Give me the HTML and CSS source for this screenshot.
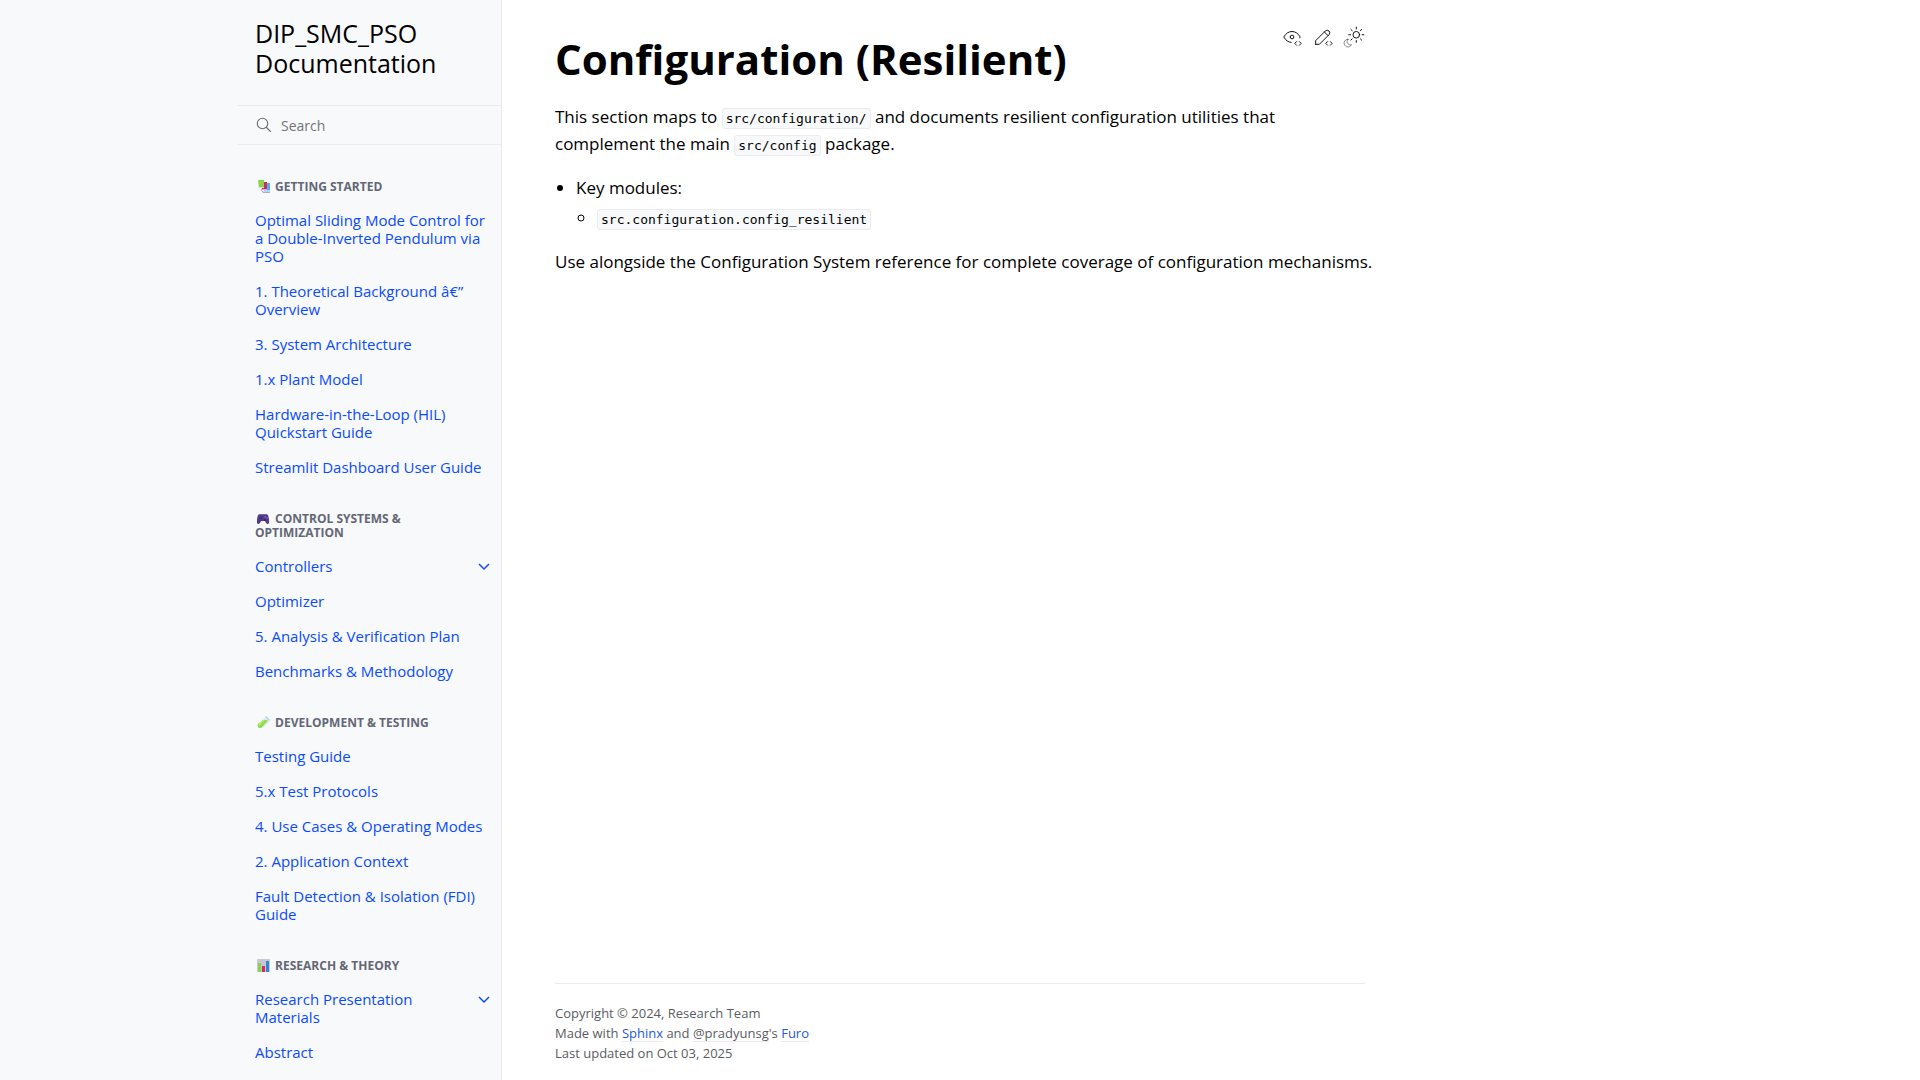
FILE: index.html
```html
<!DOCTYPE html>
<html lang="en">
<head>
<meta charset="utf-8">
<meta name="viewport" content="width=device-width, initial-scale=1">
<title>Configuration (Resilient) - DIP_SMC_PSO Documentation</title>
<link rel="stylesheet" href="styles.css">
</head>
<body>
<div class="page">
  <aside class="sidebar">
    <div class="sidebar-container">
      <a class="brand" href="#">DIP_SMC_PSO Documentation</a>
      <form class="search" role="search">
        <svg class="search-icon" viewBox="0 0 24 24" aria-hidden="true"><circle cx="10" cy="10" r="7"/><path d="M21 21l-6-6"/></svg>
        <input class="search-input" type="search" placeholder="Search" aria-label="Search">
      </form>
      <nav class="tree" aria-label="Documentation">
        <h2 class="caption"><svg class="emoji" viewBox="0 0 16 16" aria-hidden="true"><path fill="#b9a3c9" d="M5 11l4 3h6v1H8z"/><path fill="#4db2f2" d="M9 5h6v9H9z"/><path fill="#a9d8fb" d="M9 12h6v2H9z"/><path fill="#cf2960" d="M6 4h6v8H7z"/><path fill="#e8a2bf" d="M6 11h6v1H6z"/><path fill="#8bd34c" d="M3 2h6v8H4z"/><path fill="#d9dce4" d="M3 9h6v1H3z"/></svg> Getting Started</h2>
        <ul class="links">
          <li class="item"><a class="link" href="#">Optimal Sliding Mode Control for a Double-Inverted Pendulum via PSO</a></li>
          <li class="item"><a class="link" href="#">1. Theoretical Background â€” Overview</a></li>
          <li class="item"><a class="link" href="#">3. System Architecture</a></li>
          <li class="item"><a class="link" href="#">1.x Plant Model</a></li>
          <li class="item"><a class="link" href="#">Hardware-in-the-Loop (HIL) Quickstart Guide</a></li>
          <li class="item"><a class="link" href="#">Streamlit Dashboard User Guide</a></li>
        </ul>
        <h2 class="caption"><svg class="emoji" viewBox="0 0 16 16" aria-hidden="true"><path fill="#533a8c" d="M5 4h6l2 1 1 4v4q-1 2-3 0l-1-2H6l-1 2q-2 2-3 0V9l1-4z"/><path fill="#7a5fc0" d="M5 4h6v1H5z"/><circle fill="#2f2060" cx="6" cy="8" r="1"/><circle fill="#2f2060" cx="10" cy="10" r="1"/><circle fill="#3fa7e8" cx="10" cy="7" r=".7"/><circle fill="#ef5b5b" cx="12" cy="8" r=".7"/></svg> Control Systems &amp; Optimization</h2>
        <ul class="links">
          <li class="item"><a class="link" href="#">Controllers</a><button class="toggle" type="button" aria-label="Expand Controllers"><svg class="chevron" viewBox="0 0 12 12" aria-hidden="true"><path d="M1 3l5 5 5-5"/></svg></button></li>
          <li class="item"><a class="link" href="#">Optimizer</a></li>
          <li class="item"><a class="link" href="#">5. Analysis &amp; Verification Plan</a></li>
          <li class="item"><a class="link" href="#">Benchmarks &amp; Methodology</a></li>
        </ul>
        <h2 class="caption"><svg class="emoji" viewBox="0 0 16 16" aria-hidden="true"><path fill="#cfe3f5" d="M10 4l4 4-7 6q-2 1-4-1-1-2 1-3z"/><path fill="#8fdb3c" d="M8 6h5l-6 7q-2 2-4 0-1-2 0-3z"/><path fill="#b9ee7c" d="M8 6h2l-6 6q-1-1 0-2z"/><path fill="#a9cdee" d="M10 3l1-1 4 4-1 1z"/></svg> Development &amp; Testing</h2>
        <ul class="links">
          <li class="item"><a class="link" href="#">Testing Guide</a></li>
          <li class="item"><a class="link" href="#">5.x Test Protocols</a></li>
          <li class="item"><a class="link" href="#">4. Use Cases &amp; Operating Modes</a></li>
          <li class="item"><a class="link" href="#">2. Application Context</a></li>
          <li class="item"><a class="link" href="#">Fault Detection &amp; Isolation (FDI) Guide</a></li>
        </ul>
        <h2 class="caption"><svg class="emoji" viewBox="0 0 16 16" aria-hidden="true"><rect fill="#c9c6d3" x="2" y="2" width="13" height="13" rx="1"/><path fill="#8bd34c" d="M3 6h3v9H3z"/><path fill="#d52d62" d="M7 9h3v6H7z"/><path fill="#2f86dc" d="M11 4h3v11h-3z"/></svg> Research &amp; Theory</h2>
        <ul class="links">
          <li class="item"><a class="link" href="#">Research Presentation Materials</a><button class="toggle" type="button" aria-label="Expand Research Presentation Materials"><svg class="chevron" viewBox="0 0 12 12" aria-hidden="true"><path d="M1 3l5 5 5-5"/></svg></button></li>
          <li class="item"><a class="link" href="#">Abstract</a></li>
        </ul>
      </nav>
    </div>
  </aside>
  <div class="main">
    <main class="content">
      <header class="content-head">
        <h1 class="title">Configuration (Resilient)</h1>
        <div class="actions">
          <a class="action" href="#" aria-label="View this page"><svg class="icon" viewBox="0 0 24 24" aria-hidden="true"><path d="M10 12a2 2 0 1 0 4 0a2 2 0 0 0-4 0"/><path d="M11.11 17.958c-3.209-.307-5.91-2.293-8.11-5.958c2.4-4 5.4-6 9-6c3.6 0 6.6 2 9 6c-.21.352-.427.688-.647 1.008"/><path d="M20 21l2-2l-2-2"/><path d="M17 17l-2 2l2 2"/></svg></a>
          <a class="action" href="#" aria-label="Edit this page"><svg class="icon" viewBox="0 0 24 24" aria-hidden="true"><path d="M4 20h4l10.5-10.5a2.828 2.828 0 1 0-4-4l-10.5 10.5v4"/><path d="M13.5 6.5l4 4"/><path d="M20 21l2-2l-2-2"/><path d="M17 17l-2 2l2 2"/></svg></a>
          <button class="action" type="button" aria-label="Toggle Light / Dark / Auto color theme"><svg class="icon" viewBox="0 0 24 24" aria-hidden="true"><path opacity=".5" d="M5.411 14.504C5.471 14.504 5.532 14.504 5.591 14.504C3.639 16.319 4.383 19.569 6.931 20.352C7.693 20.586 8.512 20.551 9.25 20.252C8.023 23.207 4.056 23.725 2.11 21.184C.166 18.642 1.702 14.949 4.874 14.536C5.051 14.512 5.231 14.5 5.411 14.504Z"/><circle cx="14.5" cy="9.55" r="3.6"/><path d="M14.5 3.25v-2M14.5 15.85v2M10.044 5.094L8.63 3.68M19 14.05l1.414 1.414M8.2 9.55h-2M20.8 9.55h2M10.044 14.006L8.63 15.42M19 5.05l1.414-1.414"/></svg></button>
        </div>
      </header>
      <p class="text">This section maps to <code class="code">src/configuration/</code> and documents resilient configuration utilities that complement the main <code class="code">src/config</code> package.</p>
      <ul class="list">
        <li>Key modules:
          <ul class="sublist">
            <li><code class="code">src.configuration.config_resilient</code></li>
          </ul>
        </li>
      </ul>
      <p class="text">Use alongside the Configuration System reference for complete coverage of configuration mechanisms.</p>
    </main>
    <footer class="footer">
      <div>Copyright © 2024, Research Team</div>
      <div>Made with <a class="foot-link" href="#">Sphinx</a> and <a class="foot-link muted" href="#">@pradyunsg</a>'s <a class="foot-link" href="#">Furo</a></div>
      <div>Last updated on Oct 03, 2025</div>
    </footer>
  </div>
</div>
</body>
</html>
```
FILE: styles.css
```css
* {
  box-sizing: border-box;
}

body {
  margin: 0;
  background: #fff;
  color: #000;
  font-family: "Open Sans", "Noto Sans", sans-serif;
  font-size: 17px;
  line-height: 27px;
}

a {
  text-decoration: none;
}

button {
  margin: 0;
  padding: 0;
  border: 0;
  background: none;
  cursor: pointer;
}

.page {
  display: grid;
  grid-template-columns: minmax(265px, calc(50% - 458px)) minmax(0, 1fr);
  min-height: 100vh;
}

/* Sidebar */
.sidebar {
  position: sticky;
  top: 0;
  display: flex;
  justify-content: flex-end;
  height: 100vh;
  overflow: hidden;
  background: #f8f9fb;
  border-right: 1px solid #eeebee;
}

.sidebar-container {
  width: 264px;
}

.brand {
  display: block;
  padding: 18px 18px 27px;
  color: #000;
  font-size: 25px;
  line-height: 30px;
}

.search {
  display: flex;
  align-items: center;
  gap: 8px;
  height: 40px;
  padding-left: 18px;
  border-top: 1px solid #eeebee;
  border-bottom: 1px solid #eeebee;
}

.search-icon {
  flex: none;
  width: 18px;
  height: 18px;
  fill: none;
  stroke: #6b6f76;
  stroke-width: 1.5;
}

.search-input {
  flex: 1;
  min-width: 0;
  padding: 2px 0 0;
  border: 0;
  outline: 0;
  background: none;
  font: 14px/20px "Open Sans", "Noto Sans", sans-serif;
}

.search-input::placeholder {
  color: #757575;
}

.tree {
  padding-top: 8px;
}

.caption {
  margin: 27px 18px 9px;
  color: #646776;
  font-size: 12px;
  font-weight: 700;
  line-height: 14px;
  text-transform: uppercase;
}

.emoji {
  width: 16px;
  height: 16px;
  margin: -4px 1px -2px 0;
  vertical-align: -1px;
}

.links {
  margin: 0;
  padding: 0;
  list-style: none;
}

.item {
  display: flex;
  align-items: flex-start;
}

.link {
  flex: 1;
  padding: 8px 12px 9px 18px;
  color: #0a4bff;
  font-size: 15px;
  line-height: 18px;
}

.toggle {
  display: flex;
  flex: none;
  align-items: center;
  justify-content: center;
  width: 34px;
  height: 35px;
}

.chevron {
  width: 12px;
  height: 12px;
  fill: none;
  stroke: #0a4bff;
  stroke-width: 1.5;
}

/* Article */
.main {
  display: flex;
  flex-direction: column;
  width: 100%;
  max-width: 916px;
  padding: 26px 53px 17px;
}

.content {
  flex: 1;
}

.content-head {
  display: flex;
  align-items: flex-start;
  justify-content: space-between;
}

.title {
  margin: 6px 0 17px;
  font-size: 42px;
  font-weight: 700;
  line-height: 54px;
}

.actions {
  display: flex;
  gap: 9px;
}

.action {
  display: flex;
  color: #000;
}

.icon {
  width: 22px;
  height: 22px;
  fill: none;
  stroke: currentColor;
  stroke-width: 1;
  stroke-linecap: round;
  stroke-linejoin: round;
}

.text {
  margin: 0 -12px 17px 0;
}

.code {
  padding: 2px 3px;
  background: #f8f9fb;
  border: 1px solid #eeebee;
  border-radius: 3px;
  font-family: "DejaVu Sans Mono", monospace;
  font-size: 13px;
  line-height: 16px;
}

.list {
  margin: 0 0 17px;
  padding-left: 21px;
}

.sublist {
  margin: 3px 0 0;
  padding-left: 21px;
}

/* Footer */
.footer {
  padding-top: 19px;
  border-top: 1px solid #eeebee;
  color: #5a5c63;
  font-size: 13px;
  line-height: 20px;
}

.foot-link {
  color: #2757dd;
  text-decoration: underline #eeebee;
  text-underline-offset: 3px;
}

.foot-link.muted {
  color: inherit;
}
```
